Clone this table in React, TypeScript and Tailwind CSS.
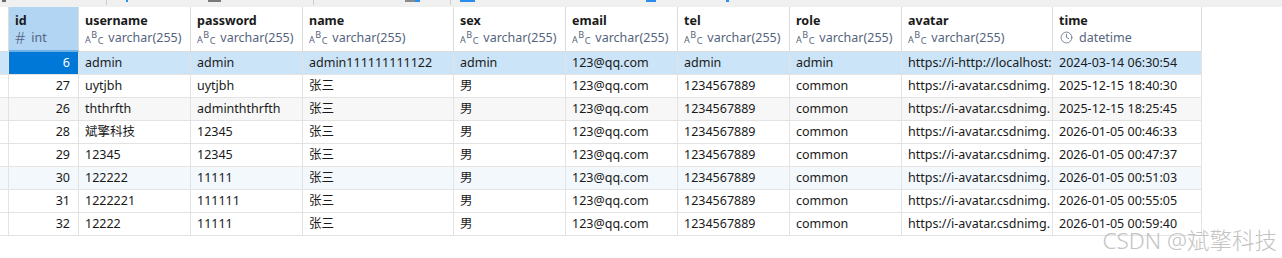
import React from "react";
import { Clock } from "lucide-react";

const GRID =
  "grid grid-cols-[9px_70px_112px_112px_151px_112px_112px_112px_112px_151px_149px] w-[1202px]";

type Col = { key: string; type: "int" | "varchar" | "datetime" };

const COLUMNS: Col[] = [
  { key: "id", type: "int" },
  { key: "username", type: "varchar" },
  { key: "password", type: "varchar" },
  { key: "name", type: "varchar" },
  { key: "sex", type: "varchar" },
  { key: "email", type: "varchar" },
  { key: "tel", type: "varchar" },
  { key: "role", type: "varchar" },
  { key: "avatar", type: "varchar" },
  { key: "time", type: "datetime" },
];

const AVATAR = "https://i-avatar.csdnimg.";

const ROWS: string[][] = [
  ["6", "admin", "admin", "admin111111111122", "admin", "123@qq.com", "admin", "admin", "https://i-http://localhost:", "2024-03-14 06:30:54"],
  ["27", "uytjbh", "uytjbh", "张三", "男", "123@qq.com", "1234567889", "common", AVATAR, "2025-12-15 18:40:30"],
  ["26", "ththrfth", "adminththrfth", "张三", "男", "123@qq.com", "1234567889", "common", AVATAR, "2025-12-15 18:25:45"],
  ["28", "斌擎科技", "12345", "张三", "男", "123@qq.com", "1234567889", "common", AVATAR, "2026-01-05 00:46:33"],
  ["29", "12345", "12345", "张三", "男", "123@qq.com", "1234567889", "common", AVATAR, "2026-01-05 00:47:37"],
  ["30", "122222", "11111", "张三", "男", "123@qq.com", "1234567889", "common", AVATAR, "2026-01-05 00:51:03"],
  ["31", "1222221", "111111", "张三", "男", "123@qq.com", "1234567889", "common", AVATAR, "2026-01-05 00:55:05"],
  ["32", "12222", "11111", "张三", "男", "123@qq.com", "1234567889", "common", AVATAR, "2026-01-05 00:59:40"],
];

const rowBg = (i: number) => {
  if (i === 0) return "bg-[#cce4f7]";
  if (i === 2) return "bg-[#f7f7f7]";
  if (i === 5) return "bg-[#f3f8fd]";
  return "bg-white";
};

// little "ABC" glyph DBeaver puts before string columns
const AbcIcon: React.FC = () => (
  <span className="inline-flex items-end h-[13px] mr-[5px] text-[9px] leading-none">
    <span>A</span>
    <span className="mb-[5px] ml-[0.5px]">B</span>
    <span className="ml-[0.5px] mb-[-1px]">C</span>
  </span>
);

const TypeLine: React.FC<{ type: Col["type"] }> = ({ type }) => {
  if (type === "int")
    return (
      <div className="flex items-center text-[#55647e]">
        <span className="text-[16px] font-light leading-none mr-[6px]">#</span>
        <span>int</span>
      </div>
    );
  if (type === "datetime")
    return (
      <div className="flex items-center text-[#55647e]">
        <Clock size={13} strokeWidth={1.4} className="mr-[6px] ml-[1px]" />
        <span>datetime</span>
      </div>
    );
  return (
    <div className="flex items-center text-[#55647e]">
      <AbcIcon />
      <span>varchar(255)</span>
    </div>
  );
};

const ToolbarStrip: React.FC = () => (
  <div className="flex items-start h-[7px] bg-[#f0f0f0]">
    <span className="ml-[2px] w-[4px] h-[2px] bg-[#6b6b6b]" />
    <span className="ml-[100px] w-px h-[5px] bg-[#cfcfcf]" />
    <span className="ml-[19px] w-[2px] h-[2px] bg-[#2b8cf0]" />
    <span className="ml-[80px] w-[13px] h-[2px] bg-[#7a7a7a]" />
    <span className="ml-[92px] w-px h-[5px] bg-[#cfcfcf]" />
    <span className="ml-[91px] w-[10px] h-[2px] bg-[#8a8a8a]" />
    <span className="w-[5px] h-[2px] bg-[#2b8cf0]" />
    <span className="ml-[30px] w-px h-[5px] bg-[#cfcfcf]" />
    <span className="ml-[9px] w-[15px] h-[2px] bg-[#2b8cf0]" />
    <span className="ml-[171px] w-[10px] h-[2px] bg-[#2b8cf0]" />
    <span className="ml-[70px] w-[3px] h-[2px] bg-[#2b8cf0]" />
  </div>
);

const App: React.FC = () => {
  return (
    <div
      className="relative w-[1282px] h-[258px] bg-white text-[12.5px] text-[#1a1a1a] overflow-hidden"
      style={{ fontFamily: '"Noto Sans", "Noto Sans CJK SC", sans-serif' }}
    >
      <ToolbarStrip />

      {/* header */}
      <div className={`${GRID} h-[45px]`}>
        <div className="border-r border-b border-[#dcdcdc] bg-white" />
        {COLUMNS.map((c, i) => (
          <div
            key={c.key}
            className={
              i === 0
                ? "border-r border-[#dcdcdc] border-b-2 border-b-[#6fb0e4] bg-[#b1d5f2] pl-[6px] pt-[5px] leading-[17px]"
                : "border-r border-b border-[#dcdcdc] bg-white pl-[6px] pt-[5px] leading-[17px]"
            }
          >
            <div className="font-bold">{c.key}</div>
            <TypeLine type={c.type} />
          </div>
        ))}
      </div>

      {/* rows */}
      {ROWS.map((row, ri) => (
        <div key={ri} className={`${GRID} h-[23px] ${rowBg(ri)}`}>
          <div className="border-r border-b border-[#e3e3e3]" />
          {row.map((v, ci) => (
            <div
              key={ci}
              className={
                ci === 0
                  ? ri === 0
                    ? "border-r border-b border-[#e3e3e3] bg-[#0078d7] text-white text-right pr-[8px] leading-[22px]"
                    : "border-r border-b border-[#e3e3e3] text-right pr-[8px] leading-[22px]"
                  : "border-r border-b border-[#e3e3e3] pl-[6px] leading-[22px] whitespace-nowrap overflow-hidden"
              }
            >
              {v}
            </div>
          ))}
        </div>
      ))}

      {/* site watermark */}
      <div className="absolute right-[5px] bottom-[3px] text-[22.5px] font-light leading-[28px] text-[#bdbdbd] opacity-90 whitespace-nowrap">
        CSDN @斌擎科技
      </div>
    </div>
  );
};

export default App;
